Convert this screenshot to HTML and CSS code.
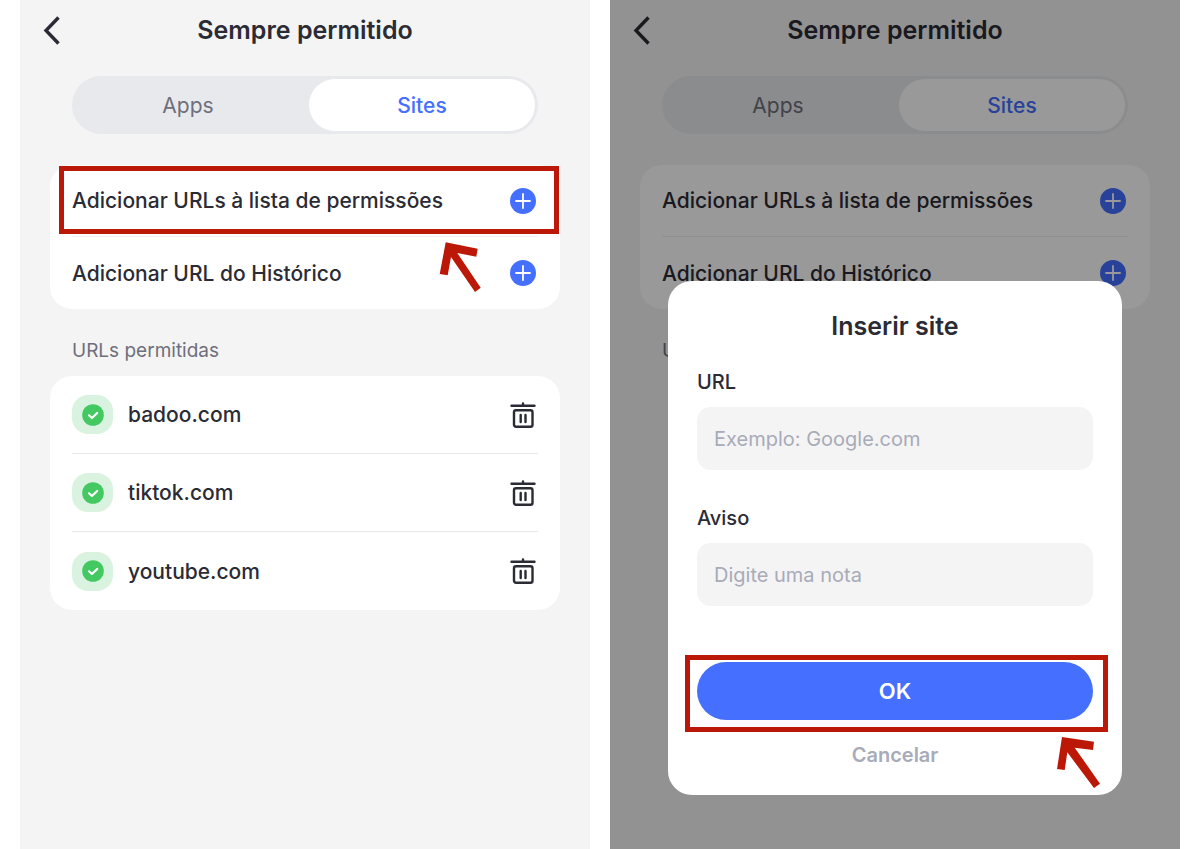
FILE: index.html
```html
<!DOCTYPE html>
<html lang="pt">
<head>
<meta charset="utf-8">
<meta name="viewport" content="width=device-width, initial-scale=1">
<title>Sempre permitido</title>
<link rel="stylesheet" href="styles.css">
</head>
<body>
<svg class="defs" width="0" height="0" aria-hidden="true">
  <symbol id="back" viewBox="0 0 20 30"><path d="M17.500 2.500 5 15.500l12.500 13" fill="none" stroke="#2b2b35" stroke-width="3.400"/></symbol>
  <symbol id="plus" viewBox="0 0 26 26"><circle cx="13" cy="13" r="13" fill="#446fff"/><path d="M13 6v14M6 13h14" stroke="#fff" stroke-width="1.800" stroke-linecap="round"/></symbol>
  <symbol id="check" viewBox="0 0 22 22"><circle cx="11" cy="11" r="10.800" fill="#43c862"/><path d="m7 11.300 2.900 2.700 5.300-5" fill="none" stroke="#fff" stroke-width="2.200" stroke-linecap="round" stroke-linejoin="round"/></symbol>
  <symbol id="trash" viewBox="0 0 26 26"><g fill="none" stroke="#2b2b35" stroke-width="2.400" stroke-linecap="round"><path d="M1.500 3.800h23M13 1.500v2"/><rect x="4" y="8.300" width="18.500" height="16.500" rx="2"/><path d="M10.700 13v7M15.500 13v7"/></g></symbol>
</svg>
<main class="screens">
  <section class="screen">
    <header class="header">
      <button class="icon-button back" aria-label="Voltar"><svg width="20" height="30"><use href="#back"/></svg></button>
      <h1 class="title">Sempre permitido</h1>
    </header>
    <div class="tabs">
      <button class="tab">Apps</button>
      <button class="tab tab-active">Sites</button>
    </div>
    <div class="card actions">
      <div class="row">
        <span>Adicionar URLs à lista de permissões</span>
        <button class="icon-button" aria-label="Adicionar URLs"><svg width="26" height="26"><use href="#plus"/></svg></button>
        <div class="highlight highlight-row"></div>
        <svg class="arrow arrow-row" width="42" height="50" viewBox="0 0 42 50" aria-hidden="true"><path fill="#bb1808" d="M6.700.3 38.700 6.700 37.300 14.700 18.300 11 41.700 45.700 36 50 12 15 8.700 33.300.7 32z"/></svg>
      </div>
      <div class="row">
        <span>Adicionar URL do Histórico</span>
        <button class="icon-button" aria-label="Adicionar do histórico"><svg width="26" height="26"><use href="#plus"/></svg></button>
      </div>
    </div>
    <h2 class="section-label">URLs permitidas</h2>
    <ul class="card sites">
      <li class="row"><span class="badge"><svg width="22" height="22"><use href="#check"/></svg></span><span class="site">badoo.com</span><button class="icon-button" aria-label="Remover badoo.com"><svg width="26" height="26"><use href="#trash"/></svg></button></li>
      <li class="row"><span class="badge"><svg width="22" height="22"><use href="#check"/></svg></span><span class="site">tiktok.com</span><button class="icon-button" aria-label="Remover tiktok.com"><svg width="26" height="26"><use href="#trash"/></svg></button></li>
      <li class="row"><span class="badge"><svg width="22" height="22"><use href="#check"/></svg></span><span class="site">youtube.com</span><button class="icon-button" aria-label="Remover youtube.com"><svg width="26" height="26"><use href="#trash"/></svg></button></li>
    </ul>
  </section>

  <section class="screen">
    <header class="header">
      <button class="icon-button back" aria-label="Voltar"><svg width="20" height="30"><use href="#back"/></svg></button>
      <h1 class="title">Sempre permitido</h1>
    </header>
    <div class="tabs">
      <button class="tab">Apps</button>
      <button class="tab tab-active">Sites</button>
    </div>
    <div class="card actions">
      <div class="row">
        <span>Adicionar URLs à lista de permissões</span>
        <button class="icon-button" aria-label="Adicionar URLs"><svg width="26" height="26"><use href="#plus"/></svg></button>
      </div>
      <div class="row">
        <span>Adicionar URL do Histórico</span>
        <button class="icon-button" aria-label="Adicionar do histórico"><svg width="26" height="26"><use href="#plus"/></svg></button>
      </div>
    </div>
    <h2 class="section-label">URLs permitidas</h2>
    <div class="scrim"></div>
    <form class="dialog" role="dialog" aria-labelledby="dialog-title">
      <h2 class="dialog-title" id="dialog-title">Inserir site</h2>
      <div class="field">
        <label for="url">URL</label>
        <input id="url" type="text" placeholder="Exemplo: Google.com">
      </div>
      <div class="field">
        <label for="note">Aviso</label>
        <input id="note" type="text" placeholder="Digite uma nota">
      </div>
      <div class="confirm">
        <button class="ok" type="button">OK</button>
        <div class="highlight highlight-ok"></div>
        <svg class="arrow arrow-ok" width="43" height="51" viewBox="0 0 43 51" aria-hidden="true"><path fill="#bb1808" d="M5 0 37 4.700 36 13 17.700 10.700 43 46.700 37 51 10.300 15.300 7.700 33 0 32z"/></svg>
      </div>
      <button class="cancel" type="button">Cancelar</button>
    </form>
  </section>
</main>
</body>
</html>
```
FILE: styles.css
```css
* { box-sizing: border-box; }

body {
  margin: 0;
  background: #fff;
  color: #2b2b35;
  font-family: Inter, "Liberation Sans", sans-serif;
}

button, input { font: inherit; color: inherit; }
button { border: 0; padding: 0; background: none; cursor: pointer; }
svg { display: block; }
.defs { position: absolute; }

.screens {
  display: grid;
  grid-template-columns: 1fr 1fr;
  gap: 20px;
  min-height: 100vh;
  padding: 0 20px;
}

.screen {
  position: relative;
  padding: 0 30px;
  background: #f4f4f4;
}

.header {
  display: grid;
  grid-template-columns: 40px 1fr 40px;
  align-items: center;
  height: 60px;
  margin: 0 -9px;
}

.title, .dialog-title {
  margin: 0;
  font-size: 25px;
  font-weight: 600;
  line-height: 32px;
  text-align: center;
}

.icon-button { flex: none; }

.tabs {
  display: grid;
  grid-template-columns: 1fr 1fr;
  gap: 8px;
  margin: 16px 22px 31px;
  padding: 3px;
  border-radius: 29px;
  background: #e8e9ed;
}

.tab {
  height: 52px;
  border-radius: 26px;
  color: #6e6f7b;
  font-size: 21px;
}

.tab-active {
  background: #fff;
  color: #446fff;
  font-weight: 500;
}

.card {
  margin: 0;
  padding: 0 22px;
  border-radius: 22px;
  background: #fff;
  list-style: none;
}

.row {
  position: relative;
  display: flex;
  align-items: center;
  justify-content: space-between;
  padding-right: 2px;
  border-bottom: 1px solid #e8e8ea;
  font-size: 21px;
  font-weight: 500;
}

.actions .row { height: 72px; border-color: #f1f1f2; }
.sites .row { height: 78px; }
.card .row:last-child { border-bottom: 0; }

.section-label {
  margin: 28px 22px 11px;
  color: #6e6f7b;
  font-size: 19px;
  font-weight: 400;
  line-height: 28px;
}

.badge {
  display: grid;
  place-items: center;
  width: 41px;
  height: 39px;
  border-radius: 16px;
  background: #d9f3e0;
}

.site { flex: 1; padding-left: 15px; }

.scrim {
  position: absolute;
  inset: 0;
  background: rgba(0, 0, 0, 0.4);
}

.dialog {
  position: absolute;
  top: 281px;
  left: 58px;
  right: 58px;
  padding: 29px 29px 25px;
  border-radius: 24px;
  background: #fff;
}

.dialog-title { margin-bottom: 28px; }

.field { margin-bottom: 36px; }

.field label {
  display: block;
  margin-bottom: 12px;
  font-size: 20px;
  font-weight: 500;
  line-height: 25px;
}

.field input {
  display: block;
  width: 100%;
  height: 63px;
  padding: 0 17px;
  border: 0;
  border-radius: 14px;
  background: #f4f4f4;
  font-size: 20px;
}

.field input::placeholder { color: #a8abb8; opacity: 1; }

.confirm { position: relative; margin-top: 56px; }

.ok {
  display: block;
  width: 100%;
  height: 58px;
  border-radius: 29px;
  background: #446fff;
  color: #fff;
  font-size: 22px;
  font-weight: 600;
}

.cancel {
  display: block;
  margin: 20px auto 0;
  color: #a8abb8;
  font-size: 20px;
  font-weight: 600;
  line-height: 30px;
}

/* Tutorial annotations */
.highlight {
  position: absolute;
  border: 5px solid #bb1808;
  pointer-events: none;
}

.highlight-row { inset: 1px -21px 2px -13px; }
.highlight-ok { inset: -7px -15px -12px -12px; }
.arrow { position: absolute; z-index: 1; }
.arrow-row { top: 77px; right: 57px; }
.arrow-ok { top: 75px; right: -7px; }
```
